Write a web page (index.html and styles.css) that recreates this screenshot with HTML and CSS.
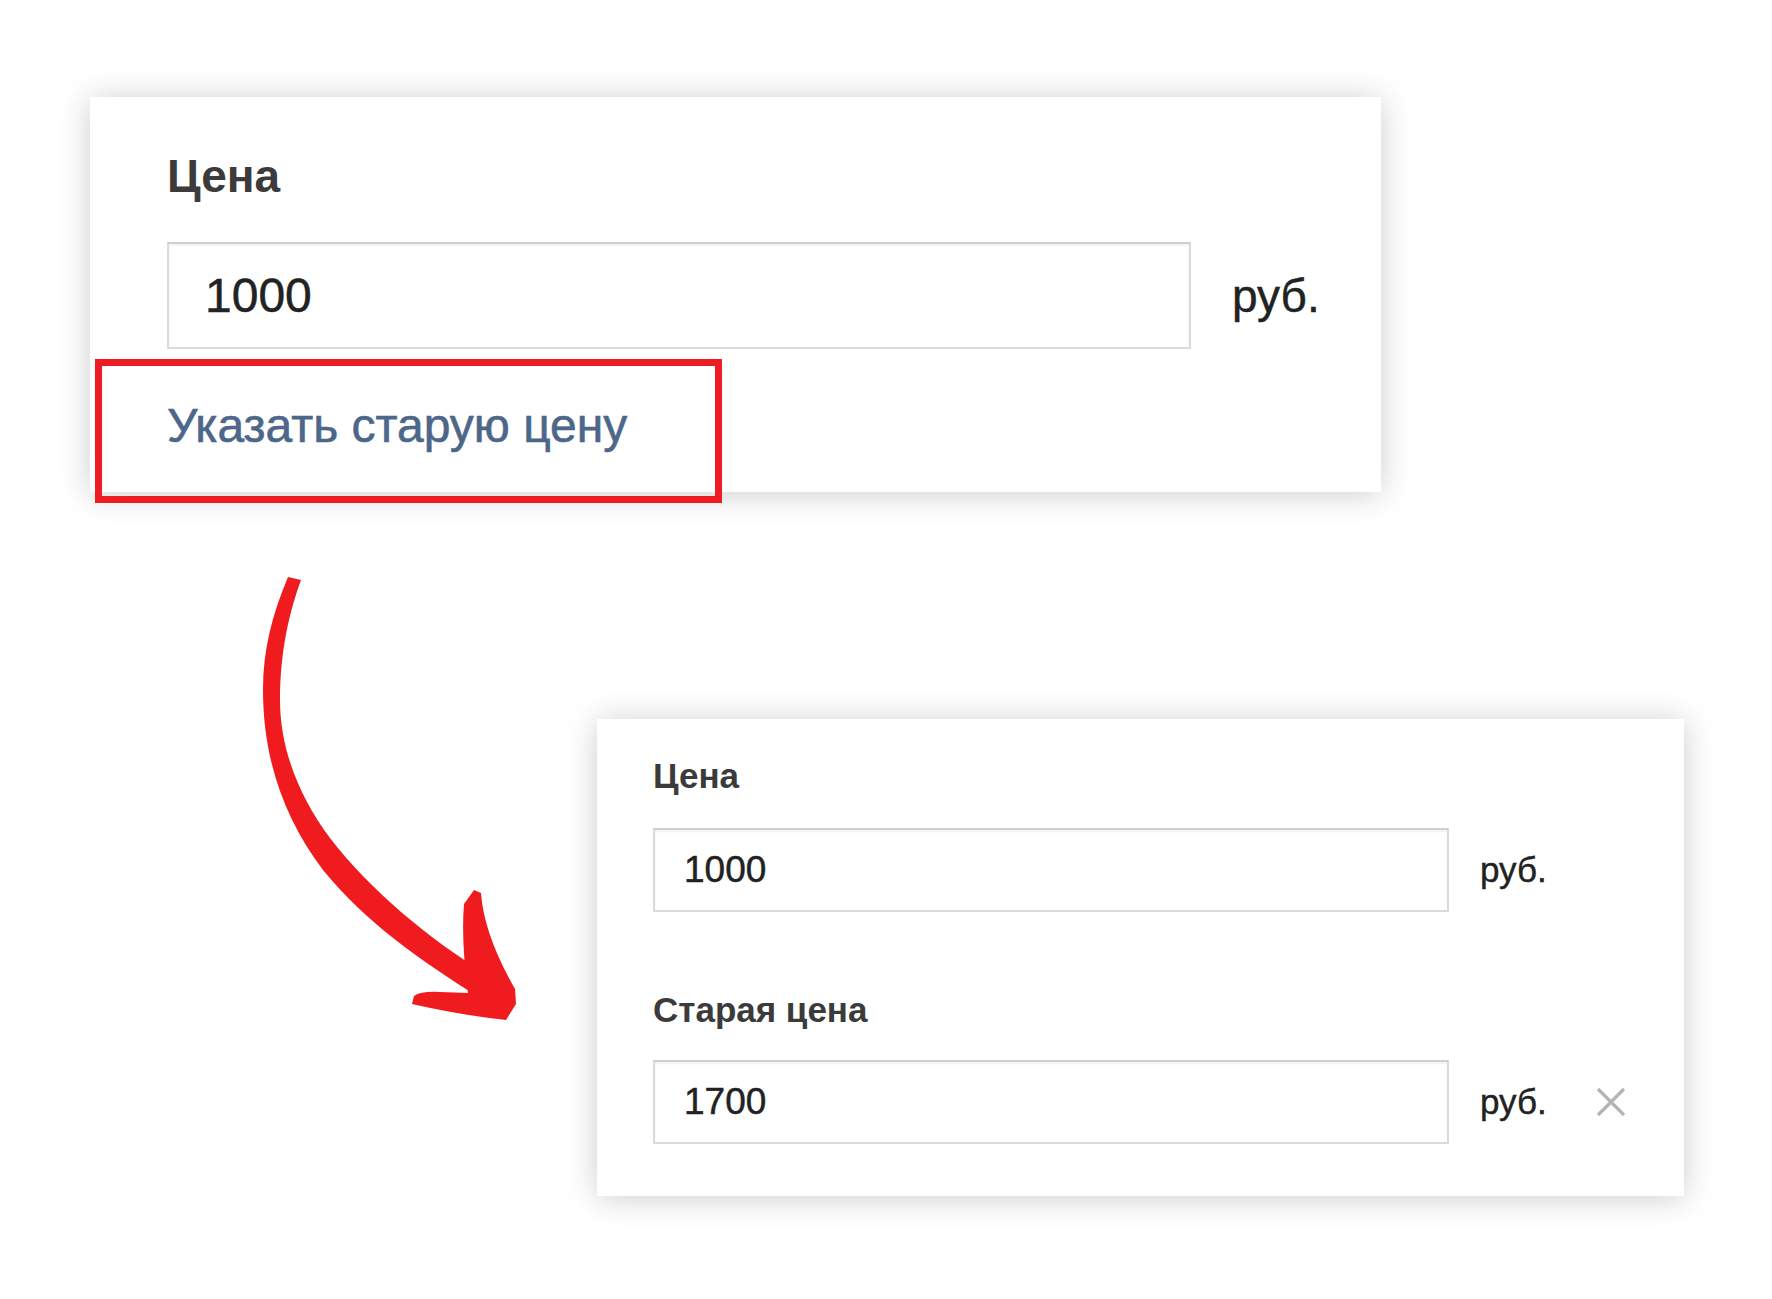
FILE: index.html
```html
<!DOCTYPE html>
<html>

<head>
    <meta charset="UTF-8">
    <title>Старая цена</title>
    <link rel="stylesheet" href="styles.css">
</head>

<body>
    <div class="page">
        <div class="card card-big">
            <div class="label">Цена</div>
            <div class="row">
                <input class="field" type="text" value="1000">
                <span class="unit">руб.</span>
            </div>
            <a class="old-link" href="#">Указать старую цену</a>
        </div>

        <div class="card card-small">
            <div class="label">Цена</div>
            <div class="row">
                <input class="field" type="text" value="1000">
                <span class="unit">руб.</span>
            </div>
            <div class="label label-old">Старая цена</div>
            <div class="row">
                <input class="field" type="text" value="1700">
                <span class="unit">руб.</span>
                <span class="remove">
                    <svg width="30" height="30" viewBox="0 0 30 30">
                        <path d="M2 2 L28 28 M28 2 L2 28" stroke="#b4b4b4" stroke-width="3.2" fill="none" />
                    </svg>
                </span>
            </div>
        </div>

        <!-- red frame round the link -->
        <div class="mark"></div>

        <svg class="arrow" width="280" height="460" viewBox="250 570 280 460">
            <path fill="#f01b1e" d="M288,577 C272,615 263,650 263,690 C263,760 285,820 323,870 C365,922 420,960 480,998 L488,975 C430,940 370,890 330,838 C300,798 280,750 280,700 C280,650 290,610 301,580 Z" />
            <path fill="#f01b1e" d="M474,890 L481,893 Q484,935 515,989 L516,1004 L506,1020 Q460,1015 412,1004 L414,996 Q421,991 440,992 L468,993 Q461,940 464,904 Z" />
        </svg>
    </div>
</body>

</html>
```

FILE: styles.css
```css
body,
div,
input {
    margin: 0;
    padding: 0;
}

body {
    background: #fff;
    font-family: "Liberation Sans", Arial, sans-serif;
}

.page {
    position: relative;
    width: 1772px;
    height: 1299px;
    padding-top: 97px;
    box-sizing: border-box;
}

.card {
    background: #fff;
    box-shadow: 0 2px 30px rgba(0, 0, 0, .2);
    box-sizing: border-box;
}

.label {
    font-weight: bold;
    color: #3b3b3b;
}

.row {
    display: flex;
    align-items: center;
}

.field {
    box-sizing: border-box;
    border: 2px solid #dadada;
    border-top-color: #cfcfcf;
    box-shadow: inset 0 2px 2px rgba(0, 0, 0, .05);
    background: #fff;
    font-family: inherit;
    color: #222;
    -webkit-text-stroke: .5px #222;
    outline: none;
}

.unit {
    color: #222;
    -webkit-text-stroke: .4px #222;
}

/* первая карточка */
.card-big {
    margin-left: 90px;
    width: 1291px;
    height: 395px;
    padding: 56px 0 0 77px;
}

.card-big .label {
    font-size: 46px;
    line-height: 46px;
}

.card-big .row {
    margin-top: 43px;
}

.card-big .field {
    width: 1024px;
    height: 107px;
    padding-left: 36px;
    font-size: 48px;
}

.card-big .unit {
    margin-left: 41px;
    font-size: 46px;
}

.old-link {
    display: block;
    margin-top: 53px;
    font-size: 48px;
    line-height: 48px;
    color: #4c6789;
    -webkit-text-stroke: .6px #4c6789;
    text-decoration: none;
}

/* вторая карточка */
.card-small {
    margin: 227px 0 0 597px;
    width: 1087px;
    height: 477px;
    padding: 39px 0 0 56px;
}

.card-small .label {
    font-size: 35px;
    line-height: 35px;
}

.card-small .row {
    margin-top: 35px;
}

.card-small .label-old {
    margin-top: 80px;
}

.card-small .row + .label-old + .row {
    margin-top: 33px;
}

.card-small .field {
    width: 796px;
    height: 84px;
    padding-left: 29px;
    font-size: 37px;
}

.card-small .unit {
    margin-left: 31px;
    font-size: 35px;
}

.remove {
    display: flex;
    margin-left: 49px;
    cursor: pointer;
}

.mark {
    position: absolute;
    left: 95px;
    top: 359px;
    width: 627px;
    height: 144px;
    border: 7px solid #ee1d23;
    box-sizing: border-box;
}

.arrow {
    position: absolute;
    left: 250px;
    top: 570px;
}
```
